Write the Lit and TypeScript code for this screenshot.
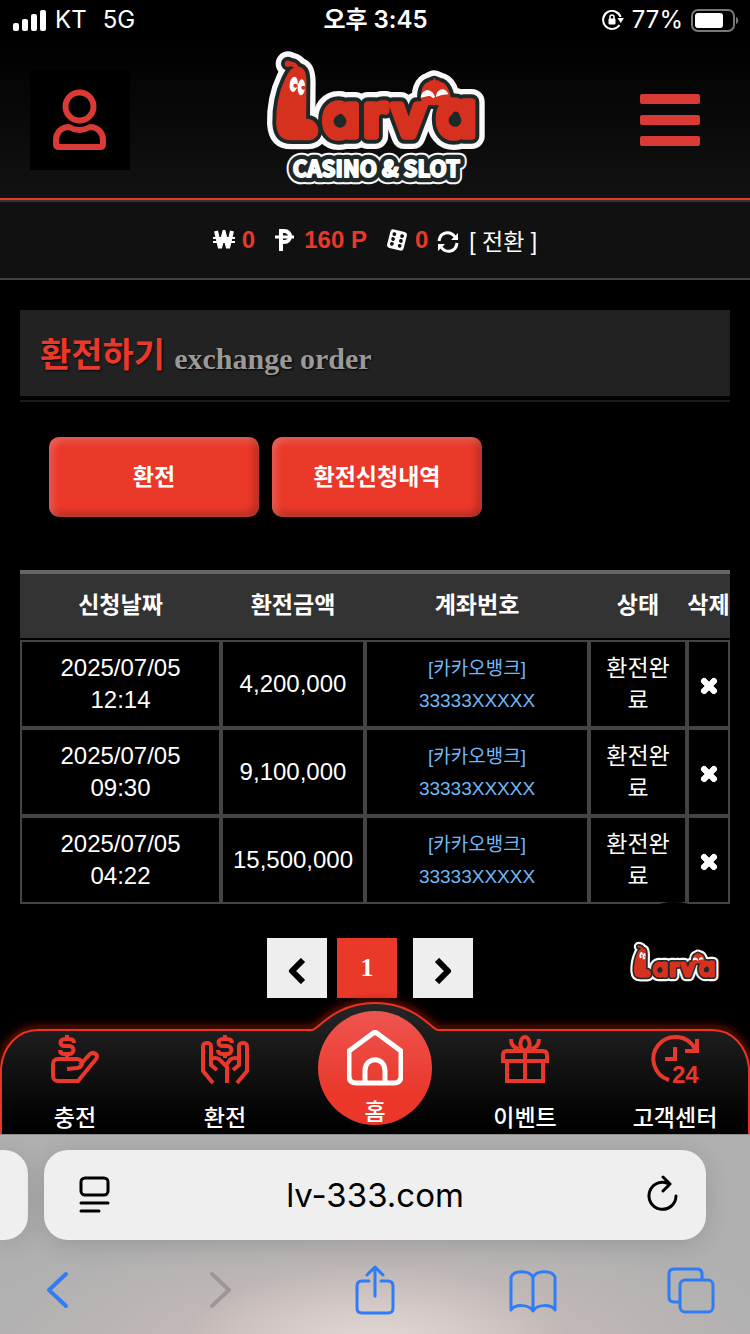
import { LitElement, html, css, svg } from "lit";
import { customElement, property } from "lit/decorators.js";

interface Order {
  date: string;
  time: string;
  amount: string;
  bank: string;
  account: string;
  status: string;
}

const ORDERS: Order[] = [
  { date: "2025/07/05", time: "12:14", amount: "4,200,000", bank: "[카카오뱅크]", account: "33333XXXXX", status: "환전완료" },
  { date: "2025/07/05", time: "09:30", amount: "9,100,000", bank: "[카카오뱅크]", account: "33333XXXXX", status: "환전완료" },
  { date: "2025/07/05", time: "04:22", amount: "15,500,000", bank: "[카카오뱅크]", account: "33333XXXXX", status: "환전완료" },
];

/* Brand logo: one worm beside the lettering, another peeking over it. */
@customElement("brand-logo")
export class BrandLogo extends LitElement {
  @property({ type: Boolean }) compact = false;

  static styles = css`
    :host { display: block; line-height: 0; }
    svg { overflow: visible; }
    .full { width: 240px; height: 150px; }
    .small { width: 92px; height: 44px; }
    .layer { stroke-linejoin: round; stroke-linecap: round; }
    .white { fill: #fbf8f9; stroke: #fbf8f9; --w: 64px; }
    .dark { fill: #1d2829; stroke: #1d2829; --w: 32px; }
    .red { fill: #d6311f; stroke: #d6311f; --w: 9px; }
    .body { stroke-width: var(--w); }
    .word { font: 600 172px Inter, sans-serif; font-feature-settings: "cv11" 1; stroke-width: calc(var(--w) + 14px); }
    .big { font-size: 188px; }
    .tag { font: 700 67px "Noto Sans CJK KR", sans-serif; }
    .tag-white { fill: #fbf8f9; stroke: #fbf8f9; stroke-width: 44px; }
    .tag-dark { fill: #1d2829; stroke: #1d2829; stroke-width: 32px; }
    .tag-face { fill: #ffffff; stroke: #ffffff; stroke-width: 6px; }
    .eye { fill: #ffffff; stroke: none; }
    .ink { fill: #1d2829; stroke: none; }
    .pupil { fill: #d6311f; stroke: none; }
    .hair { fill: none; stroke: #d6311f; stroke-width: 5px; stroke-linecap: round; }
  `;

  render() {
    return html`
      <svg class=${this.compact ? "small" : "full"} viewBox=${this.compact ? "20 6 680 326" : "0 0 720 450"} role="img" aria-label="Larva">
        <defs>
          <g id="shape">
            <path class="body" d="M130 70C147 72 150 88 150 112L149 226C166 224 178 232 184 247C190 268 178 281 160 281L110 281C82 281 70 268 68 235C67 190 76 142 95 102C105 80 116 68 130 70Z" />
            <circle class="body" cx="99" cy="56" r="5" />
            <path class="body" d="M99 56C112 52 122 58 128 68C120 62 112 60 99 56Z" />
            <path class="body" d="M504 176C498 140 508 118 524 114L537 108L552 114C572 116 584 142 584 176Z" />
            <text class="word" x="205 327 410 545" y="273">arv<tspan class="big">a</tspan></text>
          </g>
          <g id="tagline"><text class="tag" x="113" y="397">CASINO &amp; SLOT</text></g>
        </defs>
        ${this.compact
          ? null
          : svg`
          <use class="layer tag-white" href="#tagline" />
          <use class="layer tag-dark" href="#tagline" />
          <use class="layer tag-face" href="#tagline" />`}
        <use class="layer white" href="#shape" />
        <use class="layer dark" href="#shape" />
        <use class="layer red" href="#shape" />
        <path class="hair" d="M530 120L526 108M538 120V102M545 120L550 108" />
        <circle class="ink" cx="255" cy="229" r="19" />
        <circle class="ink" cx="600" cy="226" r="19" />
        <ellipse class="eye" cx="116" cy="118" rx="12" ry="23" transform="rotate(8 116 118)" />
        <ellipse class="eye" cx="139" cy="127" rx="11" ry="24" transform="rotate(4 139 127)" />
        <circle class="pupil" cx="121" cy="122" r="6" />
        <circle class="pupil" cx="145" cy="128" r="6" />
        <path class="eye" d="M497 158C500 130 532 128 540 156L535 160L524 152Z" />
        <path class="eye" d="M543 156C544 130 572 124 580 148L560 150Z" />
      </svg>
    `;
  }
}

/* Phone status line. */
@customElement("status-line")
export class StatusLine extends LitElement {
  static styles = css`
    :host {
      display: grid; grid-template-columns: 1fr auto 1fr; align-items: center; height: 40px;
      padding: 0 11px 0 12px; color: #fff; font: 400 24px/40px Inter, "Noto Sans CJK KR", sans-serif;
    }
    .side { display: flex; align-items: center; gap: 8px; }
    .net { margin-left: 8px; }
    .clock { font-weight: 600; }
    .right { justify-content: flex-end; }
    svg { display: block; }
  `;
  render() {
    return html`
      <div class="side">
        <svg width="35" height="22" viewBox="0 0 35 22" fill="#fff">
          <rect x="1" y="14" width="6" height="8" rx="2" /><rect x="10" y="10" width="6" height="12" rx="2" />
          <rect x="19" y="5" width="6" height="17" rx="2" /><rect x="28" y="1" width="6" height="21" rx="2" />
        </svg>
        <span>KT</span><span class="net">5G</span>
      </div>
      <div class="clock">오후 3:45</div>
      <div class="side right">
        <svg width="22" height="20" viewBox="0 0 22 20">
          <path d="M18.600 7A9 9 0 1 0 17.500 15" fill="none" stroke="#fff" stroke-width="2" />
          <path d="M15.500 8H22L18.700 13Z" fill="#fff" /><rect x="6.500" y="8.500" width="7" height="6" rx="1" fill="#fff" />
          <path d="M8 9V7a2 2 0 0 1 4 0v2" fill="none" stroke="#fff" stroke-width="1.500" />
        </svg>
        <span>77%</span>
        <svg class="battery" width="48" height="23" viewBox="0 0 48 23">
          <rect x="1" y="1" width="42" height="21" rx="6" fill="none" stroke="#777" stroke-width="2" />
          <rect x="4" y="4" width="28" height="15" rx="3" fill="#fff" /><path d="M45 8c3 1 3 6 0 7z" fill="#777" />
        </svg>
      </div>
    `;
  }
}

/* Bottom site navigation with the raised home button. */
@customElement("dock-nav")
export class DockNav extends LitElement {
  static styles = css`
    :host { display: block; position: relative; height: 104px; font: 500 23px/24px "Noto Sans CJK KR", sans-serif; }
    .plate { position: absolute; left: 0; top: 0; width: 100%; height: 104px; overflow: visible; }
    nav { position: relative; display: grid; grid-template-columns: repeat(5, 1fr); height: 104px; }
    a { display: flex; flex-direction: column; align-items: center; justify-content: space-between; padding: 5px 0 6px; color: #fff; text-decoration: none; white-space: nowrap; }
    .home { position: relative; justify-self: center; width: 114px; height: 114px; margin-top: -19px; padding: 19px 0 3px; box-sizing: border-box; border-radius: 50%; background: linear-gradient(#ee5550, #ea372a 75%); }
    .icon { fill: none; stroke: #e8372b; stroke-width: 4; overflow: visible; }
    .num { fill: #e8372b; stroke: none; font: 700 24px "Liberation Sans", sans-serif; }
    .house { fill: none; stroke: #fff; stroke-width: 5; stroke-linejoin: round; }
    svg { display: block; }
  `;
  render() {
    const coin = svg`<path d="M23 8c0-3-2-4-5-4h-4c-6 0-6 7 0 7h4c6 0 6 8 0 8h-4c-3 0-5-1-5-4M16 0v4M16 19v4" />`;
    return html`
      <svg class="plate" viewBox="0 0 750 104" preserveAspectRatio="none">
        <defs>
          <linearGradient id="plate" x1="0" y1="0" x2="0" y2="1">
            <stop offset="0" stop-color="#262626" /><stop offset="0.750" stop-color="#000" />
          </linearGradient>
          <filter id="glow" x="-5%" y="-30%" width="110%" height="160%"><feGaussianBlur stdDeviation="5" /></filter>
          <clipPath id="above"><rect x="0" y="-60" width="750" height="164" /></clipPath>
        </defs>
        <g clip-path="url(#above)">
          <path d="M1 140V38C3 16 18 0 38 0H312C318 0 334-27 375-27S432 0 438 0H712C732 0 747 16 749 38V140" fill="none" stroke="#b81c0c" stroke-opacity="0.800" stroke-width="6" filter="url(#glow)" />
          <path d="M1 140V38C3 16 18 0 38 0H312C318 0 334-27 375-27S432 0 438 0H712C732 0 747 16 749 38V140Z" fill="url(#plate)" stroke="#ea3322" stroke-width="2" />
        </g>
      </svg>
      <nav aria-label="메뉴">
        <a href="#deposit">
          <svg class="icon" width="48" height="48" viewBox="0 0 48 48">${coin}
            <path d="M16 34l10-1c5-1 6-4 4-7c-1-2-3-2-5-2H7c-3 0-5 2-5 5v12c0 3 2 5 5 5h20L45 24c3-4-2-8-6-5L29 30" />
          </svg><span>충전</span>
        </a>
        <a href="#exchange">
          <svg class="icon" width="48" height="48" viewBox="0 0 48 48"><g transform="translate(8 0)">${coin}</g>
            <path d="M12 48L2 36V11c0-4 8-4 8 0v19l6 5M10 24c5-2 7-1 9 1l7 7v16M36 48l10-12V11c0-4-8-4-8 0v19l-6 5M38 24c-5-2-7-1-9 1l-4 5" />
          </svg><span>환전</span>
        </a>
        <a class="home" href="#home">
          <svg class="house" width="56" height="56" viewBox="0 0 56 56">
            <path d="M2 21L25 4q3-3 6 0L54 21V46q0 7-7 7H9q-7 0-7-7ZM18 53V41c0-15 20-15 20 0V53" />
          </svg><span>홈</span>
        </a>
        <a href="#event">
          <svg class="icon" width="48" height="48" viewBox="0 0 48 48">
            <path d="M2 26V20q0-4 4-4H42q4 0 4 4V26ZM6 27V46H42V27M24 16V46M10 4c0 6 3 9 8 10M38 4c0 6-3 9-8 10M24 16c-8-4-4-14 0-14s8 10 0 14Z" />
          </svg><span>이벤트</span>
        </a>
        <a href="#support">
          <svg class="icon" width="48" height="48" viewBox="0 0 48 48">
            <path d="M18 45A22 22 0 1 1 44 14M46 4V16H34M24 12V24H14" /><text class="num" x="21" y="48">24</text>
          </svg><span>고객센터</span>
        </a>
      </nav>
    `;
  }
}

/* Browser address row and toolbar. */
@customElement("browser-bar")
export class BrowserBar extends LitElement {
  static styles = css`
    :host {
      display: flex; flex-direction: column; height: 200px; box-sizing: border-box; padding-top: 16px; border-top: 1px solid #8e8e8e;
      background: radial-gradient(ellipse 26% 40% at 50% 105%, #e0d7d5, #e0d7d500), radial-gradient(ellipse 55% 62% at 50% 105%, #cfbfbc, #cfbfbc00), #b0b0b0;
    }
    .tabs { display: flex; gap: 16px; height: 90px; padding-right: 44px; margin-top: -1px; }
    .peek { width: 28px; background: #efefef; border-radius: 0 24px 24px 0; box-shadow: 0 4px 24px #0002; }
    .address { flex: 1; display: flex; align-items: center; justify-content: space-between; min-width: 0; padding: 0 27px 0 33px; background: #efefef; border-radius: 24px; box-shadow: 0 4px 24px #0002; }
    input { flex: 1; min-width: 0; height: 50px; border: 0; padding: 0 6px 0 0; background: none; color: #000; text-align: center; font: 400 33px/50px Inter, sans-serif; }
    .tools { flex: 1; display: flex; justify-content: space-between; align-items: center; padding: 0 35px; margin-bottom: -6px; }
    button { padding: 0; border: 0; background: none; line-height: 0; }
    svg { display: block; fill: none; stroke: #2f7cf6; stroke-width: 4; stroke-linecap: round; stroke-linejoin: round; }
    .ink { stroke: #000; stroke-width: 3; }
    .off { stroke: #9c9796; }
    .thin { stroke-width: 3; }
  `;
  render() {
    return html`
      <div class="tabs">
        <div class="peek"></div>
        <div class="address">
          <button aria-label="페이지 메뉴"><svg class="ink" width="34" height="40" viewBox="0 0 34 40"><rect x="4" y="3" width="27" height="17" rx="4" /><path d="M4 28H31M4 36H22" /></svg></button>
          <input type="text" aria-label="주소" value="lv-333.com" />
          <button aria-label="새로 고침"><svg class="ink" width="34" height="40" viewBox="0 0 34 40"><path d="M31 21A13.500 13.500 0 1 1 24 9M18 2L25 9L18 16" /></svg></button>
        </div>
      </div>
      <div class="tools">
        <button aria-label="뒤로"><svg width="48" height="50" viewBox="0 0 48 50"><path d="M31 9L14 25L31 41" /></svg></button>
        <button aria-label="앞으로"><svg class="off" width="48" height="50" viewBox="0 0 48 50"><path d="M19 9L36 25L19 41" /></svg></button>
        <button aria-label="공유"><svg class="thin" width="48" height="50" viewBox="0 0 48 50"><path d="M18 16H11q-5 0-5 5V43q0 5 5 5H37q5 0 5-5V21q0-5-5-5H30M24 31V2M16 10L24 2L32 10" /></svg></button>
        <button aria-label="책갈피"><svg class="thin" width="48" height="50" viewBox="0 0 48 50"><path d="M24 12C20 5 5 5 2 12V45C6 39 20 39 24 46C28 39 42 39 46 45V12C43 5 28 5 24 12V45" /></svg></button>
        <button aria-label="탭"><svg class="thin" width="48" height="50" viewBox="0 0 48 50"><rect x="13" y="15" width="33" height="32" rx="5" /><path d="M12 37H7q-5 0-5-5V9q0-5 5-5H30q5 0 5 5V14" /></svg></button>
      </div>
    `;
  }
}

@customElement("app-root")
export class AppRoot extends LitElement {
  static styles = css`
    :host { display: flex; flex-direction: column; min-height: 100vh; background: #000; color: #fff; font-family: "Liberation Sans", "Noto Sans CJK KR", sans-serif; overflow: hidden; }
    svg { display: block; }
    button { padding: 0; border: 0; color: inherit; background: none; font: inherit; }
    .top { background: linear-gradient(#000 20%, #121212); border-bottom: 2px solid #ea3829; }
    .header { display: grid; grid-template-columns: 1fr auto 1fr; align-items: center; height: 158px; padding: 2px 30px 0; box-sizing: border-box; }
    .user { width: 100px; height: 100px; background: #000; display: grid; place-items: center; }
    .menu { justify-self: end; display: flex; flex-direction: column; gap: 11px; width: 60px; margin-right: 20px; }
    .bar { display: block; height: 10px; border-radius: 2px; background: #d93a35; }
    .wallet { display: flex; align-items: center; justify-content: center; height: 80px; box-sizing: border-box; background: #111; border-top: 2px solid #333; border-bottom: 2px solid #444; font-size: 24px; line-height: 32px; }
    .coin { display: flex; align-items: center; gap: 7px; margin-right: 19px; color: #ea3829; font-weight: 700; }
    .tight { margin-right: 9px; }
    .wide { gap: 10px; }
    .swap { display: flex; align-items: center; gap: 10px; padding-top: 4px; font-size: 23px; }
    .glyph { fill: none; stroke: #fff; stroke-width: 3; }
    main { position: relative; flex: 1; padding: 30px 20px 32px; }
    .title { display: flex; align-items: flex-start; gap: 9px; height: 86px; box-sizing: border-box; margin: 0; padding: 18px 20px 0; background: #222; color: #ea3829; font: 700 34px/50px "Noto Sans CJK KR", sans-serif; text-shadow: 1px 1px 2px #000; }
    .title small { color: #999; font: 700 30px/62px "Liberation Serif", serif; }
    .rule { height: 2px; margin-top: 4px; background: #1c1c1c; }
    .actions { display: flex; gap: 13px; margin: 35px 29px 53px; }
    .action { width: 210px; height: 80px; padding-bottom: 4px; border-radius: 10px; background: #ea3829; box-shadow: inset 3px 3px 8px #ffffff40, inset -3px -3px 8px #00000050; font: 700 23px/32px "Noto Sans CJK KR", sans-serif; }
    table { width: 100%; table-layout: fixed; border-collapse: separate; border-spacing: 0; text-align: center; font-size: 24px; line-height: 32px; }
    th { height: 70px; box-sizing: border-box; padding: 0 0 6px; background: #333; border-top: 4px solid #666; border-bottom: 2px solid #000; font: 700 23px/32px "Noto Sans CJK KR", sans-serif; white-space: nowrap; }
    td { height: 88px; box-sizing: border-box; padding: 0 12px; border: 2px solid #444; }
    .c-amount { width: 144px; } .c-account { width: 224px; } .c-status { width: 98px; } .c-delete { width: 43px; }
    td.amount, td.delete { padding: 0; }
    td.account { padding-top: 2px; color: #70b8f8; font-size: 19px; }
    td.state { font-size: 23px; word-break: break-all; }
    .cross { display: block; margin: 4px auto 0; }
    .pager { display: flex; justify-content: center; gap: 10px; margin-top: 34px; padding-right: 10px; }
    .page { display: grid; place-items: center; width: 60px; height: 60px; background: #eee; padding-top: 6px; box-sizing: border-box; }
    .current { margin-right: 6px; padding: 0; background: #ea3829; color: #fff; font: 700 26px/60px "Liberation Serif", serif; text-decoration: none; }
    .chevron { fill: none; stroke: #000; stroke-width: 6; stroke-linejoin: round; }
    .float { position: absolute; right: 16px; bottom: 8px; width: 120px; height: 120px; border-radius: 50%; background: #000; display: grid; place-items: center; }
    dock-nav { z-index: 1; }
  `;

  private row(o: Order) {
    return html`<tr>
      <td>${o.date}<br />${o.time}</td>
      <td class="amount">${o.amount}</td>
      <td class="account">${o.bank}<br />${o.account}</td>
      <td class="state">${o.status}</td>
      <td class="delete">
        <button class="cross" aria-label="삭제"><svg width="18" height="18" viewBox="0 0 18 18"><path d="M3 3L15 15M15 3L3 15" stroke="#fff" stroke-width="6" /><path d="M4 4L14 14M14 4L4 14" stroke="#fff" stroke-width="6" stroke-linecap="round" /></svg></button>
      </td>
    </tr>`;
  }

  render() {
    return html`
      <div class="top">
        <status-line></status-line>
        <header class="header">
          <button class="user" aria-label="내 정보">
            <svg width="54" height="62" viewBox="0 0 54 62" fill="none" stroke="#d93a35" stroke-width="6" stroke-linejoin="round">
              <circle cx="26.500" cy="17.500" r="14" />
              <path d="M16 38Q26.500 44 37 38C45 38 50 44 50 51V55Q50 58 47 58H6Q3 58 3 55V51C3 44 8 38 16 38Z" />
            </svg>
          </button>
          <brand-logo></brand-logo>
          <button class="menu" aria-label="전체 메뉴"><span class="bar"></span><span class="bar"></span><span class="bar"></span></button>
        </header>
      </div>
      <section class="wallet">
        <span class="coin"><svg class="glyph" width="22" height="20" viewBox="0 0 22 20"><path d="M3 1L7 18L11 3L15 18L19 1" stroke-width="4" /><path d="M0 8H22M0 12H22" stroke-width="2" /></svg>0</span>
        <span class="coin wide"><svg class="glyph" width="20" height="22" viewBox="0 0 20 22"><path d="M7 22V2H10C18 2 18 13 10 13H7" stroke-width="4" /><path d="M1 8H20" /></svg>160 P</span>
        <span class="coin tight"><svg width="22" height="22" viewBox="0 0 22 22"><g transform="rotate(14 11 11)"><rect x="2.500" y="1.500" width="17" height="19" rx="3" fill="#fff" /><g fill="#111"><circle cx="7" cy="6" r="1.900" /><circle cx="15" cy="6" r="1.900" /><circle cx="7" cy="11" r="1.900" /><circle cx="15" cy="11" r="1.900" /><circle cx="7" cy="16" r="1.900" /><circle cx="15" cy="16" r="1.900" /></g></g></svg>0</span>
        <button class="swap">
          <svg class="glyph" width="22" height="22" viewBox="0 0 22 22"><path d="M2 10C3 1 13-1 18 6M20 12C19 21 9 23 4 16" stroke-width="3" /><path d="M21 2V9H14ZM1 20V13H8Z" fill="#fff" stroke="none" /></svg>
          <span>[ 전환 ]</span>
        </button>
      </section>
      <main>
        <h1 class="title">환전하기 <small>exchange order</small></h1>
        <div class="rule"></div>
        <div class="actions">
          <button class="action">환전</button>
          <button class="action">환전신청내역</button>
        </div>
        <table>
          <colgroup><col /><col class="c-amount" /><col class="c-account" /><col class="c-status" /><col class="c-delete" /></colgroup>
          <thead><tr><th>신청날짜</th><th>환전금액</th><th>계좌번호</th><th>상태</th><th>삭제</th></tr></thead>
          <tbody>${ORDERS.map((o) => this.row(o))}</tbody>
        </table>
        <a class="float" href="#larva" aria-label="Larva"><brand-logo compact></brand-logo></a>
        <nav class="pager" aria-label="페이지">
          <button class="page" aria-label="이전"><svg class="chevron" width="20" height="26" viewBox="0 0 20 26"><path d="M16 2L5 13L16 24" /></svg></button>
          <a class="page current" href="#1">1</a>
          <button class="page" aria-label="다음"><svg class="chevron" width="20" height="26" viewBox="0 0 20 26"><path d="M4 2L15 13L4 24" /></svg></button>
        </nav>
      </main>
      <dock-nav></dock-nav>
      <browser-bar></browser-bar>
    `;
  }
}
